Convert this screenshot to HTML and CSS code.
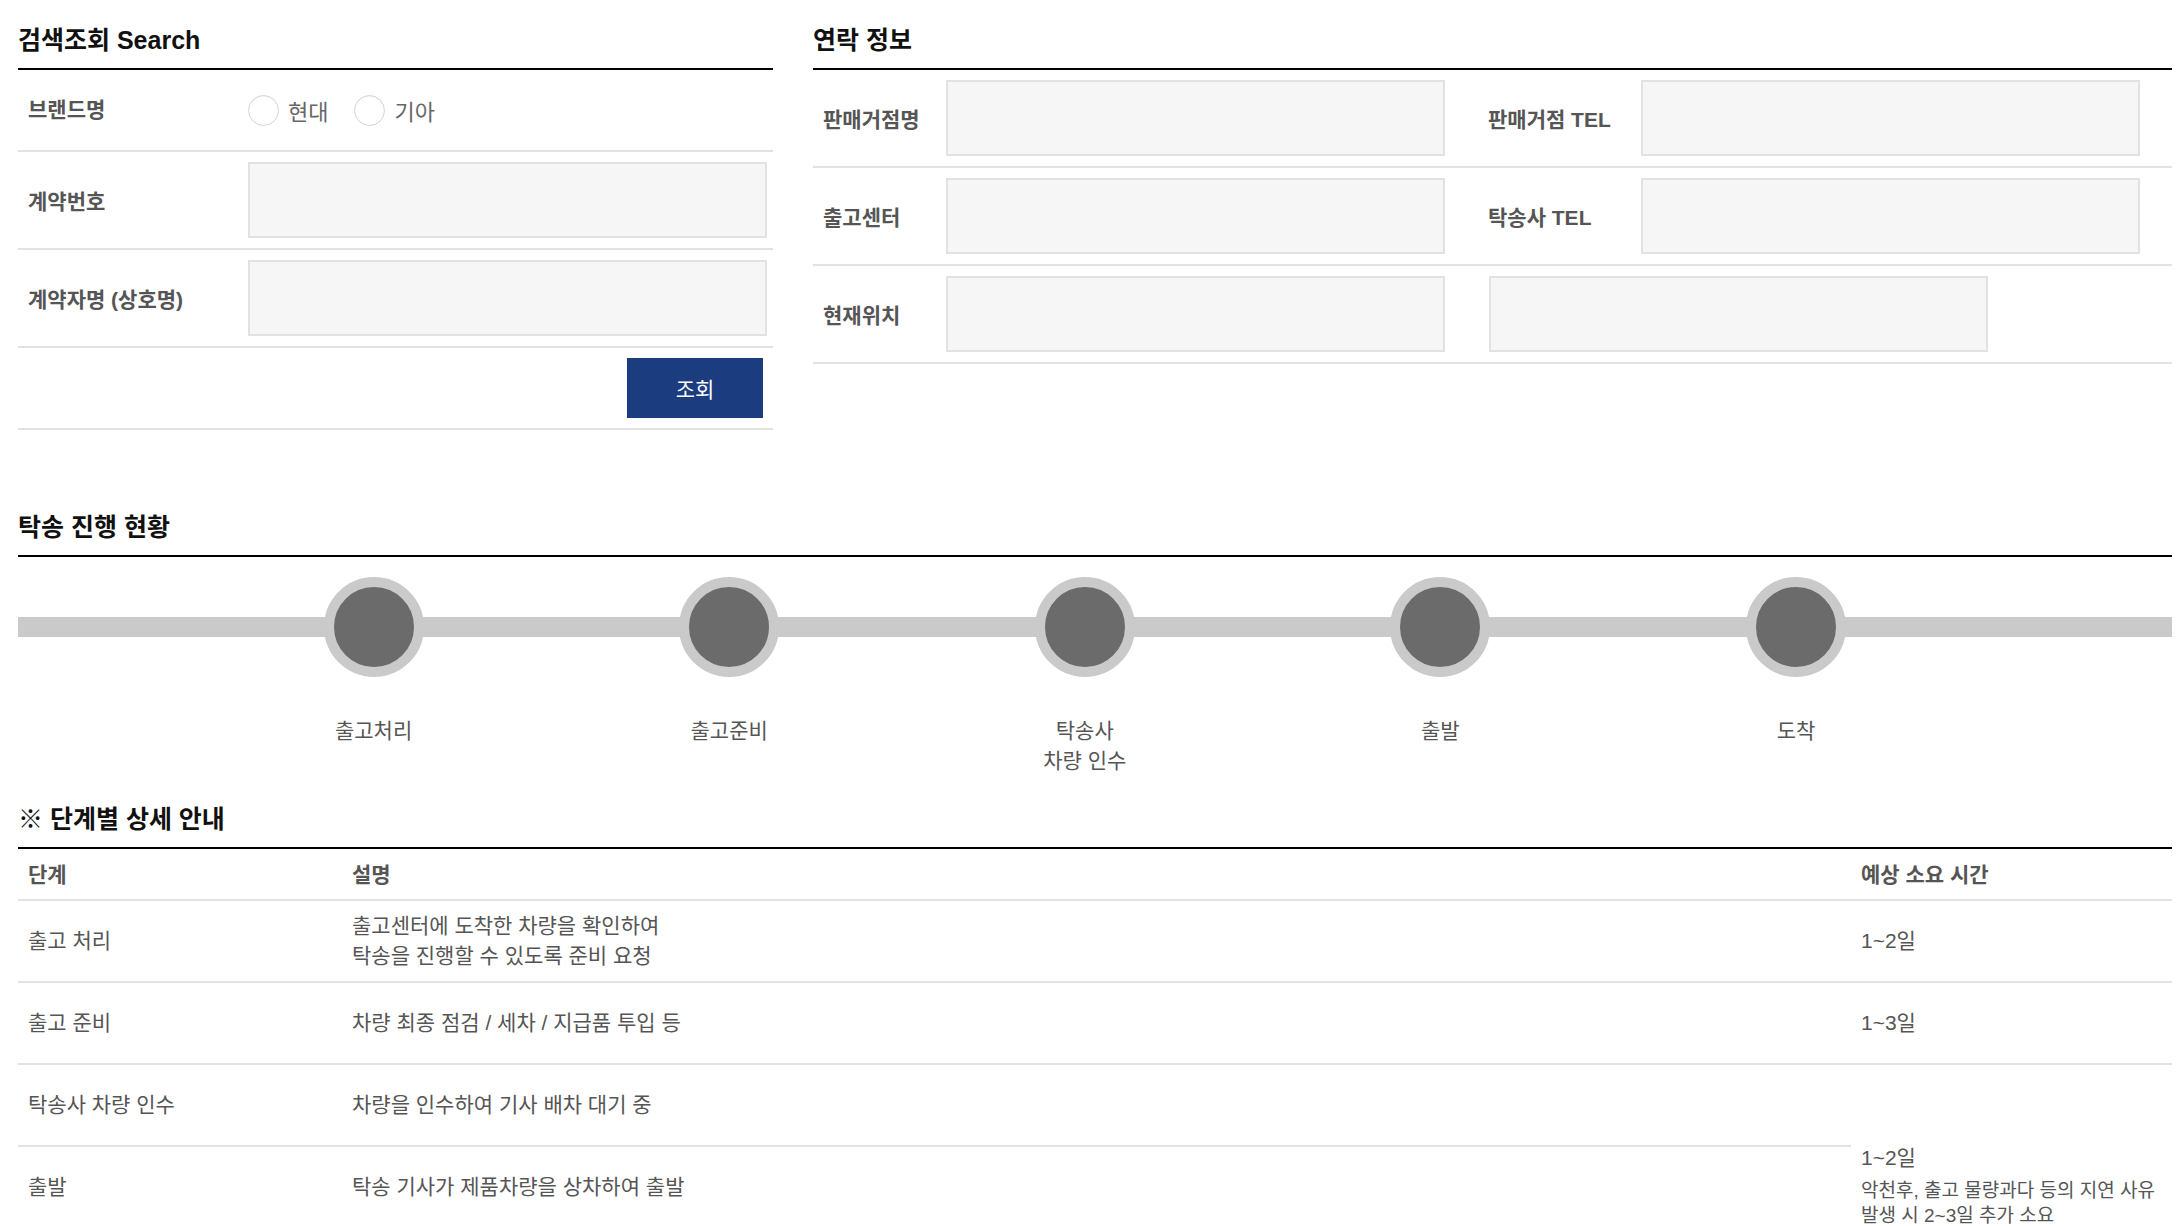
FILE: index.html
```html
<!DOCTYPE html>
<html lang="ko">
<head>
    <meta charset="UTF-8">
    <meta name="viewport" content="width=device-width, initial-scale=1.0">
    <title>탁송 조회</title>
    <link rel="stylesheet" href="styles.css">
</head>
<body>

<div class="top">
    <!-- 검색조회 -->
    <section class="search">
        <h2 class="sec-title">검색조회 Search</h2>
        <div class="form-row radio-row">
            <div class="label">브랜드명</div>
            <div class="radios">
                <label class="radio"><input type="radio" name="brand"> 현대</label>
                <label class="radio"><input type="radio" name="brand"> 기아</label>
            </div>
        </div>
        <div class="form-row">
            <div class="label">계약번호</div>
            <input type="text" class="box">
        </div>
        <div class="form-row">
            <div class="label">계약자명 (상호명)</div>
            <input type="text" class="box">
        </div>
        <div class="form-row btn-row">
            <button class="btn-search">조회</button>
        </div>
    </section>

    <!-- 연락 정보 -->
    <section class="contact">
        <h2 class="sec-title">연락 정보</h2>
        <div class="contact-row">
            <div class="label">판매거점명</div>
            <input type="text" class="box">
            <div class="label second">판매거점 TEL</div>
            <input type="text" class="box">
        </div>
        <div class="contact-row">
            <div class="label">출고센터</div>
            <input type="text" class="box">
            <div class="label second">탁송사 TEL</div>
            <input type="text" class="box">
        </div>
        <div class="contact-row">
            <div class="label">현재위치</div>
            <input type="text" class="box">
            <input type="text" class="box extra">
        </div>
    </section>
</div>

<section class="progress">
    <h2 class="sec-title">탁송 진행 현황</h2>
    <ul class="steps">
        <li class="step"><div class="circle"></div><p class="step-name">출고처리</p></li>
        <li class="step"><div class="circle"></div><p class="step-name">출고준비</p></li>
        <li class="step"><div class="circle"></div><p class="step-name">탁송사<br>차량 인수</p></li>
        <li class="step"><div class="circle"></div><p class="step-name">출발</p></li>
        <li class="step"><div class="circle"></div><p class="step-name">도착</p></li>
    </ul>
</section>

<section class="guide">
    <h2 class="sec-title">※ 단계별 상세 안내</h2>
    <table class="guide-table">
        <colgroup>
            <col class="col-step">
            <col class="col-desc">
            <col>
        </colgroup>
        <thead>
            <tr>
                <th>단계</th>
                <th>설명</th>
                <th>예상 소요 시간</th>
            </tr>
        </thead>
        <tbody>
            <tr>
                <td>출고 처리</td>
                <td>출고센터에 도착한 차량을 확인하여<br>탁송을 진행할 수 있도록 준비 요청</td>
                <td>1~2일</td>
            </tr>
            <tr>
                <td>출고 준비</td>
                <td>차량 최종 점검 / 세차 / 지급품 투입 등</td>
                <td>1~3일</td>
            </tr>
            <tr>
                <td>탁송사 차량 인수</td>
                <td>차량을 인수하여 기사 배차 대기 중</td>
                <td rowspan="2" class="time-merged">
                    1~2일
                    <p class="note">악천후, 출고 물량과다 등의 지연 사유<br>발생 시 2~3일 추가 소요</p>
                </td>
            </tr>
            <tr>
                <td>출발</td>
                <td>탁송 기사가 제품차량을 상차하여 출발</td>
            </tr>
        </tbody>
    </table>
</section>

</body>
</html>
```

FILE: styles.css
```css
/* 기본 */
body {
    margin: 0;
    padding: 25px 12px 0 18px;
    font-family: "Liberation Sans", "Noto Sans CJK KR", sans-serif;
    color: #555;
    background: #fff;
}

.sec-title {
    margin: 0;
    padding-bottom: 13px;
    font-size: 25px;
    line-height: 30px;
    font-weight: bold;
    color: #111;
    border-bottom: 2px solid #000;
}

.label {
    font-size: 21px;
    font-weight: bold;
    color: #555;
}

.box {
    display: block;
    height: 76px;
    margin: 0;
    border: 2px solid #e2e2e2;
    background: #f6f6f6;
    box-sizing: border-box;
}

/* 상단 두 블록 */
.top {
    display: flex;
    gap: 40px;
    align-items: flex-start;
}

.search {
    width: 755px;
    flex: none;
}

.contact {
    flex: 1;
}

/* 검색조회 */
.form-row {
    display: flex;
    align-items: center;
    padding: 10px 0;
    border-bottom: 2px solid #e2e2e2;
}

.form-row .label {
    width: 220px;
    padding-left: 10px;
    flex: none;
}

.form-row .box {
    width: 519px;
}

.radio-row {
    height: 60px;
}

.radio-row .label {
    margin-top: -4px;
}

.radios {
    display: flex;
    gap: 26px;
}

.radio {
    display: flex;
    align-items: center;
    gap: 9px;
    font-size: 22px;
    color: #666;
}

.radio input {
    appearance: none;
    -webkit-appearance: none;
    width: 31px;
    height: 31px;
    margin: 0;
    border: 1px solid #d4d4d4;
    border-radius: 50%;
    background: #fff;
    box-shadow: inset 0 1px 1px rgba(0, 0, 0, 0.04);
}

.btn-row {
    justify-content: flex-end;
    padding-right: 10px;
}

.btn-search {
    width: 136px;
    height: 60px;
    border: 0;
    background: #1b3c7e;
    color: #fff;
    font-family: inherit;
    font-size: 21px;
}

/* 연락 정보 */
.contact-row {
    display: grid;
    grid-template-columns: 133px 499px 33px 163px 499px;
    align-items: center;
    padding: 10px 0;
    border-bottom: 2px solid #e2e2e2;
}

.contact-row .label {
    padding-left: 10px;
}

.contact-row .second {
    grid-column: 4;
}

.contact-row .extra {
    grid-column: 4 / 6;
    width: 499px;
    margin-left: 11px;
}

/* 진행 현황 */
.progress {
    margin-top: 82px;
}

.steps {
    position: relative;
    display: flex;
    list-style: none;
    margin: 0;
    padding: 20px 0 0 177.8px;
}

.steps::before {
    content: "";
    position: absolute;
    left: 0;
    right: 0;
    top: 60px;
    height: 20px;
    background: #cacaca;
}

.step {
    position: relative;
    width: 355.6px;
    flex: none;
    text-align: center;
}

.circle {
    width: 100px;
    height: 100px;
    margin: 0 auto;
    box-sizing: border-box;
    border: 10px solid #cacaca;
    border-radius: 50%;
    background: #6b6b6b;
}

.step-name {
    margin: 39px 0 0;
    font-size: 21px;
    line-height: 30px;
    color: #555;
}

/* 단계별 안내 */
.guide {
    margin-top: 28px;
}

.guide-table {
    width: 100%;
    border-collapse: collapse;
    font-size: 21px;
    color: #555;
}

.col-step {
    width: 324px;
}

.col-desc {
    width: 1509px;
}

.guide-table th {
    height: 47px;
    padding: 0 10px 3px;
    text-align: left;
    font-weight: bold;
    border-bottom: 2px solid #e2e2e2;
}

.guide-table td {
    height: 80px;
    padding: 0 10px;
    line-height: 30px;
    border-bottom: 2px solid #e2e2e2;
}

.guide-table td.time-merged {
    vertical-align: bottom;
    padding-bottom: 0;
    border-bottom: 0;
}

.note {
    margin: 5px 0 0;
    font-size: 19px;
    line-height: 25px;
}
```
